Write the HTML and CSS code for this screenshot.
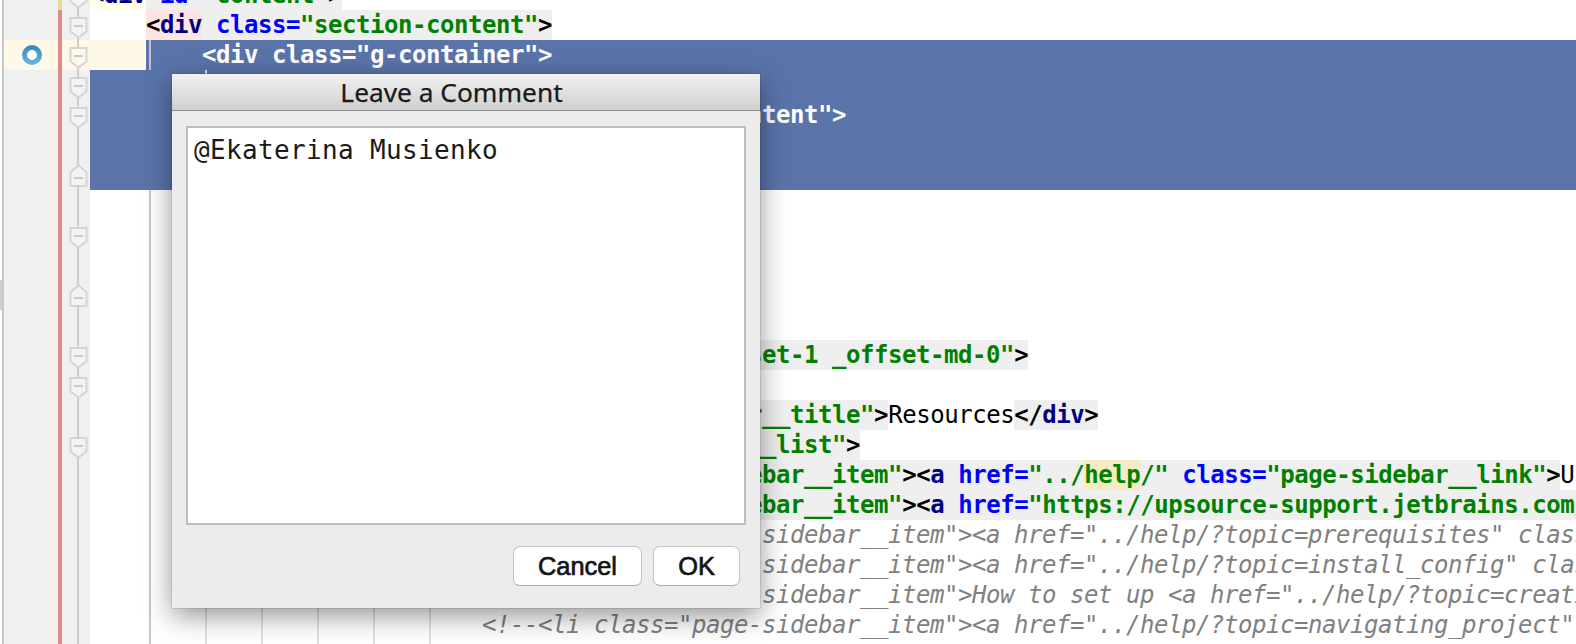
FILE: index.html
```html
<!DOCTYPE html>
<html lang="en">
<head>
<meta charset="utf-8">
<title>Leave a Comment</title>
<link rel="stylesheet" href="styles.css">
</head>
<body>
<svg class="defs" width="0" height="0" aria-hidden="true">
  <defs>
    <symbol id="fold-down" viewBox="0 0 28 30">
      <path d="M8.5 8H24.5V21.5L16.5 27.5L8.5 21.5Z" fill="currentColor" stroke="#d4d4d4" stroke-width="2"/>
      <path d="M12 16H21" stroke="#cacaca" stroke-width="2"/>
    </symbol>
    <symbol id="fold-up" viewBox="0 0 28 30">
      <path d="M16.5 5.5L24.5 12V26H8.5V12Z" fill="currentColor" stroke="#d4d4d4" stroke-width="2"/>
      <path d="M12 18H21" stroke="#cacaca" stroke-width="2"/>
    </symbol>
    <linearGradient id="ring" x1="0" y1="0" x2="0" y2="1">
      <stop offset="0" stop-color="#3b8dbb"/>
      <stop offset="1" stop-color="#62b2d8"/>
    </linearGradient>
  </defs>
</svg>

<main class="editor">
  <div class="row first">
    <div class="gutter"><div class="rail"></div><div class="bp"></div><div class="stripe"></div><div class="fold"><svg><use href="#fold-down"/></svg></div></div>
    <div class="code"><span class="match-y"><span class="t">&lt;div</span></span><span class="g"> <span class="a">id=</span><span class="s">"content"</span>&gt;</span></div>
  </div>
  <div class="row">
    <div class="gutter"><div class="rail"></div><div class="bp"></div><div class="stripe"></div><div class="fold"><svg><use href="#fold-down"/></svg></div></div>
    <div class="code">    <span class="match-p"><span>&lt;</span><span class="t">div</span></span><span class="g"> <span class="a">class=</span><span class="s">"section-content"</span>&gt;</span></div>
  </div>
  <div class="row caret">
    <div class="gutter"><div class="rail"></div><div class="bp"><svg class="ring" viewBox="0 0 20 20"><circle cx="10" cy="10" r="7.5" fill="#fff" stroke="url(#ring)" stroke-width="5"/></svg></div><div class="stripe"></div><div class="fold"><svg><use href="#fold-down"/></svg></div></div>
    <div class="code sel first-sel"><span class="caret-fill">    </span>    &lt;div class="g-container"&gt;</div>
  </div>
  <div class="row">
    <div class="gutter"><div class="rail"></div><div class="bp"></div><div class="stripe"></div><div class="fold"><svg><use href="#fold-down"/></svg></div></div>
    <div class="code sel tick">            &lt;ul&gt;</div>
  </div>
  <div class="row">
    <div class="gutter"><div class="rail"></div><div class="bp"></div><div class="stripe"></div><div class="fold"><svg><use href="#fold-down"/></svg></div></div>
    <div class="code sel">            &lt;div class="g-cols page-section__content"&gt;</div>
  </div>
  <div class="row">
    <div class="gutter"><div class="rail"></div><div class="bp"></div><div class="stripe"></div><div class="fold"></div></div>
    <div class="code sel"></div>
  </div>
  <div class="row">
    <div class="gutter"><div class="rail"></div><div class="bp"></div><div class="stripe"></div><div class="fold"><svg><use href="#fold-up"/></svg></div></div>
    <div class="code sel">            &lt;/div&gt;</div>
  </div>
  <div class="row">
    <div class="gutter"><div class="rail"></div><div class="bp"></div><div class="stripe"></div><div class="fold"></div></div>
    <div class="code guides"></div>
  </div>
  <div class="row">
    <div class="gutter"><div class="rail"></div><div class="bp"></div><div class="stripe"></div><div class="fold"><svg><use href="#fold-down"/></svg></div></div>
    <div class="code guides"></div>
  </div>
  <div class="row">
    <div class="gutter"><div class="rail"></div><div class="bp"></div><div class="stripe"></div><div class="fold"></div></div>
    <div class="code guides"></div>
  </div>
  <div class="row">
    <div class="gutter"><div class="rail"><div class="thumb"></div></div><div class="bp"></div><div class="stripe"></div><div class="fold"><svg><use href="#fold-up"/></svg></div></div>
    <div class="code guides"></div>
  </div>
  <div class="row">
    <div class="gutter"><div class="rail"></div><div class="bp"></div><div class="stripe"></div><div class="fold"></div></div>
    <div class="code guides"></div>
  </div>
  <div class="row">
    <div class="gutter"><div class="rail"></div><div class="bp"></div><div class="stripe"></div><div class="fold"><svg><use href="#fold-down"/></svg></div></div>
    <div class="code guides">                    <span class="g"><span class="t">&lt;div</span> <span class="a">class=</span><span class="s">"g-col-md-4 _offset-1 _offset-md-0"</span>&gt;</span></div>
  </div>
  <div class="row">
    <div class="gutter"><div class="rail"></div><div class="bp"></div><div class="stripe"></div><div class="fold"><svg><use href="#fold-down"/></svg></div></div>
    <div class="code guides"></div>
  </div>
  <div class="row">
    <div class="gutter"><div class="rail"></div><div class="bp"></div><div class="stripe"></div><div class="fold"></div></div>
    <div class="code guides">                        <span class="g"><span class="t">&lt;div</span> <span class="a">class=</span><span class="s">"page-sidebar__title"</span>&gt;</span><span class="plain">Resources</span><span class="g">&lt;/<span class="t">div</span>&gt;</span></div>
  </div>
  <div class="row">
    <div class="gutter"><div class="rail"></div><div class="bp"></div><div class="stripe"></div><div class="fold"><svg><use href="#fold-down"/></svg></div></div>
    <div class="code guides">                        <span class="g"><span class="t">&lt;ul</span> <span class="a">class=</span><span class="s">"page-sidebar__list"</span>&gt;</span></div>
  </div>
  <div class="row">
    <div class="gutter"><div class="rail"></div><div class="bp"></div><div class="stripe"></div><div class="fold"></div></div>
    <div class="code guides">                            <span class="g"><span class="t">&lt;li</span> <span class="a">class=</span><span class="s">"page-sidebar__item"</span>&gt;&lt;<span class="t">a</span> <span class="a">href=</span><span class="s">"../<span class="hit">help</span>/"</span> <span class="a">class=</span><span class="s">"page-sidebar__link"</span>&gt;</span><span class="plain">Upsource Help</span></div>
  </div>
  <div class="row">
    <div class="gutter"><div class="rail"></div><div class="bp"></div><div class="stripe"></div><div class="fold"></div></div>
    <div class="code guides">                            <span class="g"><span class="t">&lt;li</span> <span class="a">class=</span><span class="s">"page-sidebar__item"</span>&gt;&lt;<span class="t">a</span> <span class="a">href=</span><span class="s">"https://upsource-support.jetbrains.com/hc/en-us"</span></span></div>
  </div>
  <div class="row">
    <div class="gutter"><div class="rail"></div><div class="bp"></div><div class="stripe"></div><div class="fold"></div></div>
    <div class="code guides c">                            &lt;!--&lt;li class="page-sidebar__item"&gt;&lt;a href="../help/?topic=prerequisites" class="page-sidebar__link"&gt;</div>
  </div>
  <div class="row">
    <div class="gutter"><div class="rail"></div><div class="bp"></div><div class="stripe"></div><div class="fold"></div></div>
    <div class="code guides c">                            &lt;!--&lt;li class="page-sidebar__item"&gt;&lt;a href="../help/?topic=install_config" class="page-sidebar__link"&gt;</div>
  </div>
  <div class="row">
    <div class="gutter"><div class="rail"></div><div class="bp"></div><div class="stripe"></div><div class="fold"></div></div>
    <div class="code guides c">                            &lt;!--&lt;li class="page-sidebar__item"&gt;How to set up &lt;a href="../help/?topic=creating_project"&gt;</div>
  </div>
  <div class="row">
    <div class="gutter"><div class="rail"></div><div class="bp"></div><div class="stripe"></div><div class="fold"></div></div>
    <div class="code guides c">                            &lt;!--&lt;li class="page-sidebar__item"&gt;&lt;a href="../help/?topic=navigating_project" class="page-sidebar__link"&gt;</div>
  </div>
  <div class="row">
    <div class="gutter"><div class="rail"></div><div class="bp"></div><div class="stripe"></div><div class="fold"></div></div>
    <div class="code guides"></div>
  </div>
</main>

<section class="dialog">
  <header class="dialog-title">Leave a Comment</header>
  <div class="dialog-body">
    <div class="comment">@Ekaterina Musienko</div>
    <div class="actions">
      <button class="btn btn-cancel" type="button">Cancel</button>
      <button class="btn btn-ok" type="button">OK</button>
    </div>
  </div>
</section>
</body>
</html>
```

FILE: styles.css
```css
* { box-sizing: border-box; }

html, body {
  margin: 0;
  height: 644px;
  overflow: hidden;
  background: #fff;
}

.defs { display: block; height: 0; }

.editor {
  margin-top: -20px;
  font-family: "DejaVu Sans Mono", monospace;
  font-size: 24px;
  letter-spacing: -0.448px;
  font-weight: 700;
  color: #000;
}

.row {
  display: flex;
  height: 30px;
  line-height: 31px;
}

.gutter {
  display: flex;
  flex: 0 0 90px;
  height: 30px;
}

.rail {
  flex: 0 0 4px;
  border-right: 2px solid #c8c8c8;
  background: #fff;
}

.thumb {
  width: 2px;
  height: 38px;
  background: #cfcfcf;
}

.bp {
  flex: 0 0 54px;
  display: flex;
  align-items: center;
  justify-content: center;
  background: #f0f0f0;
}

.ring {
  width: 20px;
  height: 20px;
  margin-left: 2px;
}

.stripe {
  flex: 0 0 4px;
  background: #e08a8a;
}

.first .stripe { background: #e0dc88; }

.fold {
  flex: 0 0 28px;
  height: 30px;
  color: #f3f3f3;
  background: linear-gradient(#cdcdcd, #cdcdcd) 15px 0 / 2px 100% no-repeat, #f0f0f0;
}

.fold svg {
  display: block;
  width: 28px;
  height: 30px;
}

.caret .bp { background: #fef9e6; }

.caret .fold {
  color: #fef9e6;
  background: linear-gradient(#cdcdcd, #cdcdcd) 15px 0 / 2px 100% no-repeat, #fef9e6;
}

.code {
  flex: 1;
  min-width: 0;
  height: 30px;
  overflow: hidden;
  white-space: pre;
}

.sel {
  color: #fff;
  background: #5a74aa;
}

.first-sel {
  background:
    linear-gradient(#b9c2d6, #b9c2d6) 59px 0 / 2px 100% no-repeat,
    #5a74aa;
}

.tick {
  background:
    linear-gradient(#dfe4ee, #dfe4ee) 115px 0 / 2px 100% no-repeat,
    #5a74aa;
}

.caret-fill {
  display: inline-block;
  height: 30px;
  vertical-align: top;
  background: #fef9e6;
}

.guides {
  background:
    linear-gradient(#c6c6c6, #c6c6c6) 59px 0 / 2px 100% no-repeat,
    repeating-linear-gradient(90deg, transparent 0 3px, #e2e2e2 3px 5px, transparent 5px 56px) 56px 0 / 336px 100% no-repeat;
}

.t { color: #000080; }
.a { color: #0000ff; }
.s { color: #008000; }

.g,
.plain,
.match-y,
.match-p,
.hit {
  display: inline-block;
  height: 30px;
  vertical-align: top;
}

.g { background: #efefef; }
.plain { background: #fff; font-weight: 400; }
.match-y { background: #ffffe8; }
.match-p { background: #ffe4e4; }
.hit { background: #f6ebc1; }

.c {
  color: #808080;
  font-style: italic;
  font-weight: 400;
}

.dialog {
  position: absolute;
  left: 172px;
  top: 74px;
  width: 588px;
  height: 534px;
  display: flex;
  flex-direction: column;
  background: #ececec;
  box-shadow: 0 8px 26px rgba(0, 0, 0, 0.42), 0 0 1px rgba(0, 0, 0, 0.5);
}

.dialog-title {
  flex: 0 0 37px;
  display: flex;
  align-items: center;
  justify-content: center;
  padding-right: 29px;
  font-family: "Noto Sans", sans-serif;
  font-size: 26.3px;
  -webkit-text-stroke: 0.25px #1a1a1a;
  line-height: 36px;
  color: #1a1a1a;
  background: linear-gradient(#f2f2f2, #cfcfcf);
  border-bottom: 1px solid #8a8a8a;
}

.dialog-body {
  flex: 1;
  display: flex;
  flex-direction: column;
  padding: 15px 14px 22px;
}

.comment {
  flex: 1;
  padding: 7px 6px;
  font-family: "DejaVu Sans Mono", monospace;
  font-size: 26px;
  letter-spacing: 0.35px;
  line-height: 30px;
  color: #1a1a1a;
  background: #fff;
  border: 2px solid #bdbdbd;
}

.actions {
  display: flex;
  justify-content: flex-end;
  gap: 11px;
  margin-top: 21px;
  padding-right: 6px;
}

.btn {
  height: 40px;
  padding: 0;
  font-family: "Liberation Sans", Arial, sans-serif;
  font-size: 25.4px;
  color: #141414;
  -webkit-text-stroke: 0.7px #141414;
  background: #fff;
  border: 1px solid #c4c4c4;
  border-bottom-color: #adadad;
  border-radius: 7px;
}

.btn-cancel { width: 129px; }
.btn-ok { width: 87px; }
```
